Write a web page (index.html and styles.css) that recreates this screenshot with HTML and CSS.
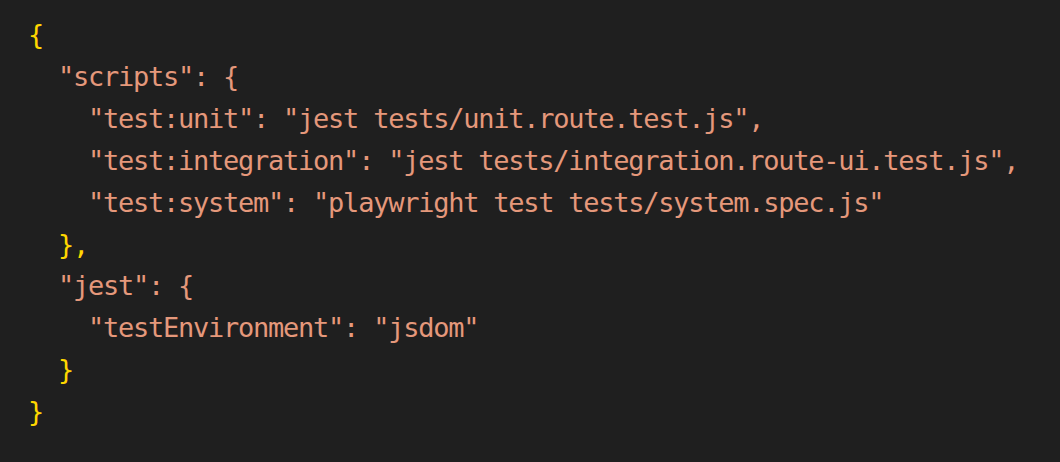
FILE: index.html
```html
<!DOCTYPE html>
<html>
<head>
<meta charset="utf-8">
<link rel="stylesheet" href="styles.css">
</head>
<body>
<div class="code">
<div class="line"><span class="brace">{</span></div>
<div class="line">  <span class="str">"scripts": </span><span class="str">{</span></div>
<div class="line">    <span class="str">"test:unit": "jest tests/unit.route.test.js",</span></div>
<div class="line">    <span class="str">"test:integration": "jest tests/integration.route-ui.test.js",</span></div>
<div class="line">    <span class="str">"test:system": "playwright test tests/system.spec.js"</span></div>
<div class="line">  <span class="brace">},</span></div>
<div class="line">  <span class="str">"jest": {</span></div>
<div class="line">    <span class="str">"testEnvironment": "jsdom"</span></div>
<div class="line">  <span class="brace">}</span></div>
<div class="line"><span class="brace">}</span></div>
</div>
</body>
</html>
```
FILE: styles.css
```css
html, body {
  margin: 0;
  padding: 0;
  background: #1f1f1f;
}
.code {
  padding: 14px 0 0 28px;
  font-family: "DejaVu Sans Mono", monospace;
  font-size: 27px;
  letter-spacing: -1.25px;
  line-height: 41.9px;
  color: #e5987b;
}
.line {
  white-space: pre;
}
.brace {
  color: #ffd700;
}
.str {
  color: #e5987b;
}
```
